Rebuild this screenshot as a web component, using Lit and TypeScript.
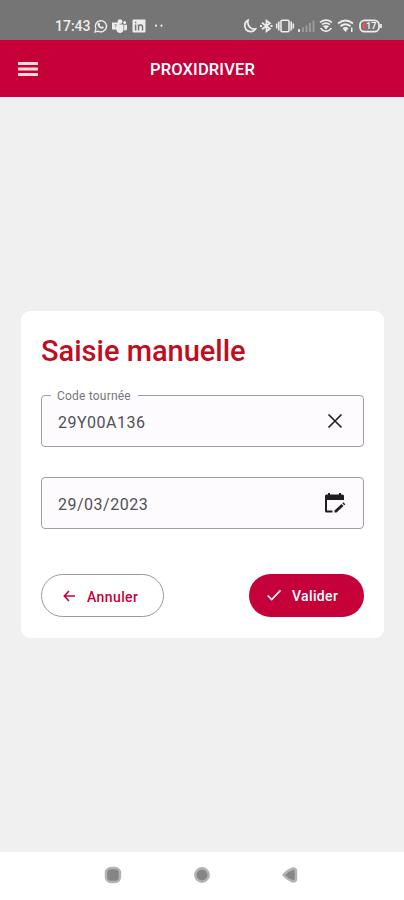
import { LitElement, html, css, svg } from "lit";
import { customElement, property, state } from "lit/decorators.js";

@customElement("status-bar")
class StatusBar extends LitElement {
  static styles = css`
    :host {
      display: flex;
      height: 40px;
      box-sizing: border-box;
      padding: 12px 22px 0 55px;
      background: #757575;
      color: #ededed;
      align-items: flex-start;
      justify-content: space-between;
    }
    .group { display: flex; align-items: center; height: 28px; }
    .time { font: 500 14px/28px Roboto, sans-serif; width: 38px; letter-spacing: 0; white-space: nowrap; }
    svg { display: block; fill: none; stroke: currentColor; overflow: visible; }
    .solid { fill: currentColor; stroke: none; }
    .left { gap: 5px; }
    .left .time { margin-right: -4px; }
    .more { margin-left: 4px; }
    .right { gap: 4px; }
    .level { font: 700 9px Roboto, sans-serif; fill: #ededed; stroke: none; }
  `;
  render() {
    return html`
      <div class="group left">
        <span class="time">17:43</span>
        <svg width="13" height="14" viewBox="0 0 13 14" stroke-width="1.3">
          <path d="M1 13l.9-3.2A5.6 5.6 0 1 1 4 12.1z" />
          <path class="solid" d="M4.1 4l1.2-.3.8 1.7-.6.8c.5.9 1.1 1.4 2 1.8l.8-.7 1.5.8c0 1.2-.8 1.8-1.8 1.7C5.600 9.500 3.600 7.300 3.500 5.400c0-.6.2-1.100.6-1.400z" />
        </svg>
        <svg width="15" height="14" viewBox="0 0 15 14">
          <g class="solid">
            <circle cx="8" cy="2.600" r="2.400" />
            <circle cx="12.700" cy="3.600" r="1.500" />
            <path d="M0 3.500h7.500v7H0zM7.500 5.500h4v5a3.600 3.600 0 0 1-7 1V10h3zM12.200 5.700H15v3.500c0 1.600-1 2.400-2.800 2.300z" />
          </g>
          <path d="M2.200 5.700h3M3.700 5.700v3" stroke="#9a9a9a" stroke-width=".8" />
        </svg>
        <svg width="14" height="14" viewBox="0 0 14 14">
          <rect class="solid" x=".5" y=".5" width="13" height="13" rx="1" />
          <path d="M3.600 5.500v6M3.600 2.700v1.600M6.500 5.500v6M6.500 8c0-2.600 4-2.600 4 0v3.500" stroke="#757575" stroke-width="1.500" />
        </svg>
        <svg class="more" width="8" height="14" viewBox="0 0 8 14">
          <circle class="solid" cx="1" cy="6.700" r="1.100" />
          <circle class="solid" cx="6.500" cy="6.700" r="1.100" />
        </svg>
      </div>
      <div class="group right">
        <svg width="13" height="14" viewBox="0 0 13 14" stroke-width="1.700">
          <path d="M5 1.300C.2 3.500.8 12.500 7.500 12.600c2.300 0 4-.9 5-2.700C7.500 10.800 3.800 6.500 5 1.300z" />
        </svg>
        <svg width="12" height="14" viewBox="0 0 12 14" stroke-width="1.700">
          <path d="M2 3.700l8 6L6.500 12.300V1.700L10 4.300l-8 6" />
          <path class="solid" d="M0 6h2v2H0zM10.500 6h2v2h-2z" />
        </svg>
        <svg width="18" height="14" viewBox="0 0 18 14" stroke-width="1.600">
          <rect x="5" y="1.300" width="8" height="11.400" rx="1" />
          <path d="M2.800 2.500v9M.7 4.500v5M15.200 2.500v9M17.300 4.500v5" />
        </svg>
        <svg width="17" height="14" viewBox="0 0 17 14" stroke-width="1.800">
          <path d="M1 10v3" />
          <path d="M5 8.500V13M8.500 6.500V13M12 4v9M15.500 1.500V13" opacity=".35" />
        </svg>
        <svg width="14" height="14" viewBox="0 0 14 14" stroke-width="1.600">
          <path d="M1 3.300q6-4.300 12 0M3 5.500q4-2.800 8 0M1.500 9.300Q7 15.500 12.500 9.300" />
          <path class="solid" d="M4 7Q7 5.500 10 7L7 10.500z" />
        </svg>
        <svg width="18" height="14" viewBox="0 0 18 14" stroke-width="1.800">
          <path d="M1 4.500q7.500-6 15 0M3.500 7.300q5-4 10 0" />
          <path class="solid" d="M5.500 9.200Q8.500 7 11.500 9.200L8.500 13zM14 8.500h1.500V13H14z" />
        </svg>
        <svg width="23" height="14" viewBox="0 0 23 14" stroke-width="1.800">
          <rect x="1" y="1.300" width="19" height="11.400" rx="4.500" />
          <path d="M22 5v4" />
          <path d="M6.500 3.700H5.500C2.600 4 2.600 10 5.500 10.300h1z" fill="#e2554f" stroke="none" />
          <text class="level" x="7" y="10.300">17</text>
        </svg>
      </div>
    `;
  }
}

@customElement("app-bar")
class AppBar extends LitElement {
  @property() heading = "";
  static styles = css`
    :host {
      display: grid;
      grid-template-columns: 1fr auto 1fr;
      align-items: center;
      height: 57px;
      box-sizing: border-box;
      padding: 1px 18px 0;
      background: #c60038;
      color: #fff;
      font: 500 16.500px/20px Roboto, sans-serif;
    }
    .menu { display: block; width: 20px; height: 15px; fill: #fbdcd8; }
    .heading { letter-spacing: 0.150px; padding: 2px 0 0 1px; }
  `;
  render() {
    return html`
      <svg class="menu" viewBox="0 0 20 15">
        <path d="M0 0h20v3H0zM0 5.500h20v3H0zM0 11h20v3H0z" />
      </svg>
      <span class="heading">${this.heading}</span>
    `;
  }
}

const closeIcon = svg`<path d="M1.500 1.500l13 13M14.500 1.500l-13 13" fill="none" stroke="#222" stroke-width="1.700"/>`;
const calendarIcon = svg`
  <path fill="#1d1d22" d="M3 0h2v1.500h9V0h2v1.500h1.500q1.500 0 1.500 1.500V7H2v10.500h5.500v2H1.500Q0 19.500 0 18V3Q0 1.500 1.500 1.500H3z"/>
  <path fill="#1d1d22" d="M9.500 17.500L16.500 11l2 2-7 6.500h-2zM17.300 10.200l1-1 2 2-1 1z"/>`;

@customElement("outlined-field")
class OutlinedField extends LitElement {
  @property() label = "";
  @property() value = "";
  @property() icon = "close";
  static styles = css`
    :host { display: block; font-family: Roboto, sans-serif; }
    .field {
      display: flex;
      position: relative;
      align-items: center;
      justify-content: space-between;
      height: 52px;
      box-sizing: border-box;
      border: 1px solid #a0a0a3;
      border-radius: 4px;
      background: #fdfbfe;
      padding: 0 18px 0 16px;
    }
    .label {
      position: absolute;
      top: -8px;
      left: 9px;
      padding: 0 7px 0 6px;
      background: linear-gradient(#fff 50%, #fdfbfe 50%);
      color: #77777a;
      font-size: 12px;
      line-height: 16px;
      letter-spacing: 0.200px;
    }
    .value { color: #505055; font-size: 16px; line-height: 20px; letter-spacing: 0.500px; padding-top: 3px; }
    svg { display: block; overflow: visible; }
    .close { width: 16px; height: 16px; margin-right: 2px; }
  `;
  render() {
    return html`
      <div class="field">
        ${this.label ? html`<span class="label">${this.label}</span>` : null}
        <span class="value">${this.value}</span>
        ${this.icon === "close"
          ? html`<svg class="close" viewBox="0 0 16 16">${closeIcon}</svg>`
          : html`<svg width="20" height="20" viewBox="0 0 20 20">${calendarIcon}</svg>`}
      </div>
    `;
  }
}

@customElement("app-root")
class AppRoot extends LitElement {
  @state() code = "29Y00A136";
  @state() date = "29/03/2023";
  static styles = css`
    :host {
      display: flex;
      flex-direction: column;
      height: 900px;
      background: #f0f0f0;
      font-family: Roboto, sans-serif;
    }
    main { flex: 1; display: flex; flex-direction: column; padding: 214px 20px 0 21px; }
    .card {
      display: flex;
      flex-direction: column;
      height: 327px;
      box-sizing: border-box;
      padding: 20px 20px 21px;
      border-radius: 9px;
      background: #fff;
    }
    h1 { margin: 0 0 24px 0; color: #c00d20; font-size: 29px; font-weight: 500; line-height: 40px; white-space: nowrap; }
    .date { margin-top: 30px; }
    .actions { display: flex; justify-content: space-between; margin-top: auto; }
    button {
      display: flex;
      align-items: center;
      height: 43px;
      border-radius: 22px;
      font: 500 14px/20px Roboto, sans-serif;
      box-sizing: border-box;
      padding: 1px 0 0;
    }
    .cancel { width: 123px; padding-top: 3px; padding-left: 21px; gap: 11px; border: 1px solid #99999b; background: #fff; color: #c60038; letter-spacing: 0.400px; }
    .cancel svg { margin-top: -2px; }
    .submit { width: 115px; padding-left: 18px; gap: 11px; border: 0; background: #c60038; color: #fff; letter-spacing: 0.350px; }
    .submit svg { margin-top: -2px; }
    button svg { fill: none; stroke: currentColor; stroke-width: 1.600; }
    nav {
      display: flex;
      align-items: center;
      justify-content: space-between;
      height: 48px;
      box-sizing: border-box;
      padding: 0 105px 2px 104px;
      background: #fff;
    }
    nav svg { display: block; fill: #858585; stroke: #b4b4b4; stroke-width: 2.500; stroke-linejoin: round; }
  `;
  render() {
    return html`
      <status-bar></status-bar>
      <app-bar heading="PROXIDRIVER"></app-bar>
      <main>
        <section class="card">
          <h1>Saisie manuelle</h1>
          <outlined-field label="Code tournée" .value=${this.code}></outlined-field>
          <outlined-field class="date" icon="calendar" .value=${this.date}></outlined-field>
          <div class="actions">
            <button class="cancel">
              <svg width="13" height="12" viewBox="0 0 13 12"><path d="M6 1L1.300 6 6 11M1.300 6H12" /></svg>
              <span>Annuler</span>
            </button>
            <button class="submit">
              <svg width="14" height="12" viewBox="0 0 14 12"><path d="M.7 6.500l4 4L13.500 1.300" /></svg>
              <span>Valider</span>
            </button>
          </div>
        </section>
      </main>
      <nav>
        <svg width="18" height="18" viewBox="0 0 18 18"><rect x="2" y="2" width="14" height="14" rx="5" /></svg>
        <svg width="18" height="18" viewBox="0 0 18 18"><circle cx="9" cy="9" r="6.700" /></svg>
        <svg width="18" height="18" viewBox="0 0 18 18"><path d="M2.500 9Q7 4 12 2.500q3 0 3 2.700v7.600q0 2.700-3 2.700Q7 14 2.500 9z" /></svg>
      </nav>
    `;
  }
}
